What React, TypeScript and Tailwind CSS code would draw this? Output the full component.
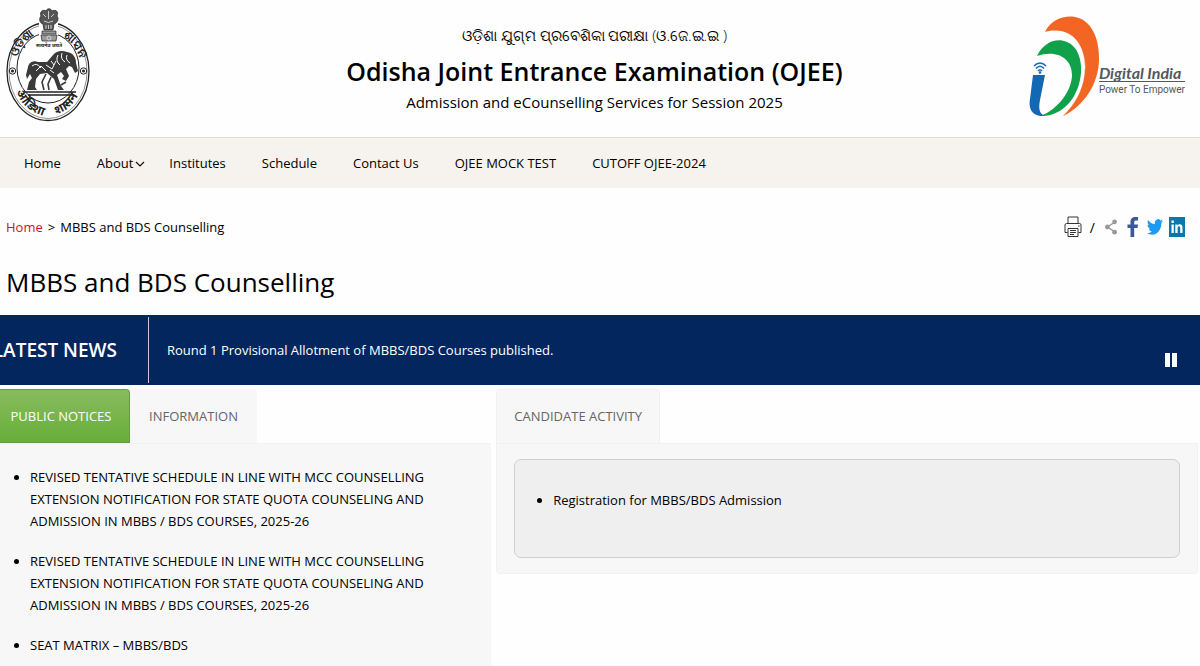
import React from "react";

const notices = [
  "REVISED TENTATIVE SCHEDULE IN LINE WITH MCC COUNSELLING EXTENSION NOTIFICATION FOR STATE QUOTA COUNSELING AND ADMISSION IN MBBS / BDS COURSES, 2025-26",
  "REVISED TENTATIVE SCHEDULE IN LINE WITH MCC COUNSELLING EXTENSION NOTIFICATION FOR STATE QUOTA COUNSELING AND ADMISSION IN MBBS / BDS COURSES, 2025-26",
  "SEAT MATRIX – MBBS/BDS",
];

const menu = [
  { label: "Home" },
  { label: "About", sub: true },
  { label: "Institutes" },
  { label: "Schedule" },
  { label: "Contact Us" },
  { label: "OJEE MOCK TEST" },
  { label: "CUTOFF OJEE-2024" },
];

function Seal() {
  return (
    <svg viewBox="0 0 96 124" className="h-[124px] w-24" role="img" aria-label="Government of Odisha">
      <defs>
        <path id="sealTop" d="M15.200 66 A33 38 0 0 1 80.800 66" />
        <path id="sealBottom" d="M13.500 84 A36 44 0 0 0 82.500 84" />
      </defs>
      <g fill="none" stroke="#222">
        <ellipse cx="48" cy="71.500" rx="41" ry="49" strokeWidth="1.300" />
        <ellipse cx="48" cy="71.500" rx="39" ry="47" strokeWidth=".5" />
        <ellipse cx="48" cy="68" rx="31" ry="35" strokeWidth="1" />
      </g>
      <rect x="39" y="9" width="19" height="33" fill="#fff" />
      <g fill="#555" stroke="#222" strokeWidth=".7">
        <path d="M43 24 C39 23 39 18 41 16 C39 12 43 9 46 11 C47 8 51 8 52 11 C56 9 59 12 57 16 C59 18 58 23 54 24 L53 30 L44 30Z" />
        <path d="M42 31 H56 V34 H42Z M41 35 H57 L56 41 H42Z" fill="#999" />
      </g>
      <g stroke="#ddd" strokeWidth=".9" fill="none">
        <path d="M43 14 L46 17 M54 14 L51 17 M48.500 11 V19 M44 21 Q48.500 24 53 21 M46 25 V29 M48.500 25 V29 M51 25 V29" />
        <circle cx="49" cy="38" r="2" />
      </g>
      <g fill="none" stroke="#222" strokeWidth="1">
        <circle cx="12.500" cy="71" r="3.200" />
        <circle cx="83.500" cy="71" r="3.200" />
      </g>
      <circle cx="12.500" cy="71" r="1.500" fill="#222" />
      <circle cx="83.500" cy="71" r="1.500" fill="#222" />
      <g className="font-['Noto_Sans',sans-serif] font-bold" fill="#222" fontSize="12" textAnchor="middle">
        <text><textPath href="#sealTop" startOffset="23%">ଓଡ଼ିଶା</textPath></text>
        <text><textPath href="#sealTop" startOffset="79%">ଶାସନ</textPath></text>
        <text><textPath href="#sealBottom" startOffset="27%">ओडिशा</textPath></text>
        <text><textPath href="#sealBottom" startOffset="73%">शासन</textPath></text>
        <text x="49" y="47" fontSize="5">सत्यमेव जयते</text>
      </g>
      <path d="M27 90 L29 82 L32 78 L30 74 L27 79 L26 75 L28 67 C29 62 34 60 38 62 L47 62 L53 55 C56 51 62 50 67 52 C73 53 76 57 76 63 L78 71 L75 73 L72 67 L69 66 L66 69 L69 76 L66 81 L62 79 L64 76 L61 72 L57 75 L61 86 L64 90 L58 90 L54 79 L47 73 L40 74 L36 79 L35 87 L37 90Z" fill="#3a3a3a" />
      <path d="M32 66 Q37 62 41 68 M36 71 L41 66 L46 71 M46 65 L52 69 L56 61 M58 55 Q55 61 60 65 M62 53 Q60 59 65 62 M67 55 Q65 60 70 63 M51 61 L54 65 M50 70 L54 73" fill="none" stroke="#fff" strokeWidth="1" />
      <path d="M46 74 L42 82 L44 90 M51 77 L48 84 L49 90 M66 82 L61 85" fill="none" stroke="#3a3a3a" strokeWidth="1.600" />
      <path d="M24 92 H76 M28 95 H73" stroke="#222" strokeWidth="1.500" />
    </svg>
  );
}

function DigitalIndia() {
  return (
    <a href="#digital-india" className="flex items-center text-[#55585c]">
      <svg viewBox="0 0 70 104" className="h-[104px] w-[70px]" aria-hidden="true">
        <path d="M16 17 C21 6 34 0 46 2 C62 5 70 22 70 44 C70 69 54 92 34 101 C47 88 56 72 56 52 C56 29 42 10 16 17Z" fill="#f26522" />
        <path d="M34 101 C47 88 56 72 56 52 C56 40 52 31 46 24 C54 34 58 46 56 57 C54 76 46 90 34 101Z" fill="#fbc58c" />
        <path d="M8 41 C14 28 27 22 38 27 C48 31 53 43 52 58 C50 82 34 102 11 101 C29 95 43 75 43 60 C43 44 29 34 8 41Z" fill="#12a14b" />
        <path d="M4 60 H16 L11 85 C9 95 11 100 17 101 C4 102 -1 95 1 84Z" fill="#1268b3" />
        <g fill="none" stroke="#1268b3" strokeWidth="1.500">
          <path d="M5 51 Q11 45 17 51 M7 53.500 Q11 49 15 53.500 M9 56 Q11 53.500 13 56" />
        </g>
        <circle cx="11" cy="57.500" r="1.300" fill="#1268b3" />
      </svg>
      <span className="mt-[29px] flex flex-col">
        <span className="border-b border-current font-['Lato',sans-serif] text-[16px] leading-4 font-bold italic">Digital India</span>
        <span className="font-['Roboto',sans-serif] text-[10px] leading-4">Power To Empower</span>
      </span>
    </a>
  );
}

function Tools() {
  return (
    <div className="flex items-center">
      <button type="button" aria-label="Print">
        <svg viewBox="0 0 18 22" className="h-[22px] w-[18px]" fill="none" stroke="#333" strokeWidth="1">
          <path d="M4 7.500 V1 H14 V7.500 M3.500 16.500 H1 V9 Q1 7.500 2.500 7.500 H15.500 Q17 7.500 17 9 V16.500 H14.500 M4 12.500 H14 V20.500 H4Z M6 14.500 H12 M6 16.500 H12 M6 18.500 H10" />
          <path d="M14 10 H15.500" />
        </svg>
      </button>
      <span className="ml-2 text-[14px]">/</span>
      <button type="button" aria-label="Share" className="ml-2.5">
        <svg viewBox="0 0 12 16" className="h-4 w-3">
          <path d="M10 3 L2.500 8 L10 13" fill="none" stroke="#999" strokeWidth="1.500" />
          <g fill="#999"><circle cx="9.600" cy="2.800" r="2.400" /><circle cx="2.400" cy="8" r="2.400" /><circle cx="9.600" cy="13.200" r="2.400" /></g>
        </svg>
      </button>
      <a href="#facebook" aria-label="Facebook" className="ml-2.5">
        <svg viewBox="0 0 12 20" className="h-5 w-3"><path d="M3.500 20 V11 H.5 V7.500 H3.500 V5 C3.500 1.500 5.500 0 8.200 0 H11 V3.500 H9 C7.700 3.500 7.200 4 7.200 5.300 V7.500 H11 L10.500 11 H7.200 V20Z" fill="#3b5998" /></svg>
      </a>
      <a href="#twitter" aria-label="Twitter" className="ml-2">
        <svg viewBox="0 2 24 20" className="h-4 w-4" preserveAspectRatio="none"><path d="M23.950 4.570a10 10 0 0 1-2.820.770 4.960 4.960 0 0 0 2.160-2.720c-.950.550-2 .950-3.130 1.180a4.920 4.920 0 0 0-8.380 4.480C7.690 8.090 4.070 6.130 1.640 3.160a4.820 4.820 0 0 0-.670 2.480c0 1.710.870 3.210 2.190 4.100a4.900 4.900 0 0 1-2.230-.620v.060a4.920 4.920 0 0 0 3.950 4.830 5 5 0 0 1-2.210.080 4.940 4.940 0 0 0 4.600 3.420A9.870 9.870 0 0 1 0 19.540a13.990 13.990 0 0 0 7.560 2.210c9.050 0 14-7.500 14-13.980 0-.210 0-.420-.020-.630a9.940 9.940 0 0 0 2.410-2.570z" fill="#1d9bf0" /></svg>
      </a>
      <a href="#linkedin" aria-label="LinkedIn" className="ml-1.5">
        <svg viewBox="0 0 16 20" className="h-5 w-4"><path d="M0 0H16V20H0Z" fill="#0e76a8" /><path d="M2.500 7.500H4.800V16H2.500Z M2.500 3.500H4.800V6H2.500Z M6.300 7.500H8.500V8.700C9.800 6.600 13.500 6.800 13.500 10.500V16H11.200V11C11.200 8.700 8.600 8.900 8.600 11V16H6.300Z" fill="#fff" /></svg>
      </a>
    </div>
  );
}

export default function App() {
  return (
    <div className="min-h-screen overflow-x-hidden bg-[#fefefe] font-['Open_Sans','Noto_Sans',sans-serif] text-[13px] text-black">
      <header className="flex h-[137px] items-start justify-between pr-[15px]">
        <div className="w-[160px] shrink-0"><Seal /></div>
        <div className="flex flex-col items-center pt-5">
          <p className="text-[15px] leading-[30px] font-light" lang="or">ଓଡ଼ିଶା ଯୁଗ୍ମ ପ୍ରବେଶିକା ପରୀକ୍ଷା (ଓ.ଜେ.ଇ.ଇ )</p>
          <p className="text-[25px] leading-[42px] font-semibold">Odisha Joint Entrance Examination (OJEE)</p>
          <p className="text-[15px] leading-5">Admission and eCounselling Services for Session 2025</p>
        </div>
        <div className="pt-[15px]"><DigitalIndia /></div>
      </header>

      <nav className="border-t border-[#dddddd] bg-[#f6f2ed]">
        <ul className="flex h-[50px] items-center gap-9 pt-0.5 pl-6">
          {menu.map((m) => (
            <li key={m.label} className={m.sub ? "-mr-3" : ""}>
              <a href="#menu" className="flex items-center gap-0.5 whitespace-nowrap font-medium">
                {m.label}
                {m.sub && (
                  <svg viewBox="0 0 10 6" className="h-1.5 w-2.5" fill="none" stroke="#111" strokeWidth="1.200"><path d="M1 1 L5 5 L9 1" /></svg>
                )}
              </a>
            </li>
          ))}
        </ul>
      </nav>

      <div className="flex h-[78px] items-center justify-between pr-[15px] pl-1.5">
        <p className="flex gap-[5px] pt-0.5 text-[13px]">
          <a href="#home" className="text-[#c4161c]">Home</a>
          <span>&gt;</span>
          <span>MBBS and BDS Counselling</span>
        </p>
        <Tools />
      </div>

      <h1 className="h-[49px] pl-1.5 text-[26px] leading-8 font-medium">MBBS and BDS Counselling</h1>

      <section className="flex h-[70px] items-center bg-[#03265f] py-0.5 text-white">
        <h2 className="flex h-full w-[149px] shrink-0 items-center justify-end overflow-hidden border-r border-[#c9c3e6] pr-[31px] text-[19px] font-semibold whitespace-nowrap">LATEST NEWS</h2>
        <a href="#news" className="ml-[18px] flex-1 pt-0.5 text-[13px]">Round 1 Provisional Allotment of MBBS/BDS Courses published.</a>
        <button type="button" aria-label="Pause" className="mt-5 mr-[23px] flex gap-0.5">
          <span className="h-3.5 w-[5px] bg-white" />
          <span className="h-3.5 w-[5px] bg-white" />
        </button>
      </section>

      <main className="flex items-start gap-[5px] pt-1 pr-0.5">
        <section className="w-[41%] shrink-0">
          <div className="flex h-[54px]">
            <button type="button" className="w-[130px] rounded-tr-[4px] border border-l-0 border-[#6b9b4a] bg-linear-to-b from-[#87bc5c] to-[#69ad3b] pr-[7px] pt-px text-white">PUBLIC NOTICES</button>
            <button type="button" className="w-[127px] rounded-t-[4px] bg-[#f7f7f7] pt-px text-[#666]">INFORMATION</button>
          </div>
          <ul className="flex list-disc flex-col gap-[18px] border-t border-[#f2f2f2] bg-[#f7f7f7] pt-[22px] pr-16 pb-4 pl-[30px] leading-[22px]">
            {notices.map((n, i) => (
              <li key={i}><a href="#notice">{n}</a></li>
            ))}
          </ul>
        </section>
        <section className="flex-1">
          <div className="flex h-[54px]">
            <button type="button" className="w-[164px] rounded-t-[4px] border border-b-0 border-[#f1f1f1] bg-[#f7f7f7] text-[#666]">CANDIDATE ACTIVITY</button>
          </div>
          <div className="rounded-b-[4px] border border-[#f1f1f1] bg-[#f7f7f7] px-[17px] py-[15px]">
            <ul className="h-[99px] list-disc rounded-[7px] border border-[#cfcfcf] bg-[#efefef] pt-[29px] pl-[38px] leading-[22px]">
              <li><a href="#registration">Registration for MBBS/BDS Admission</a></li>
            </ul>
          </div>
        </section>
      </main>
    </div>
  );
}
